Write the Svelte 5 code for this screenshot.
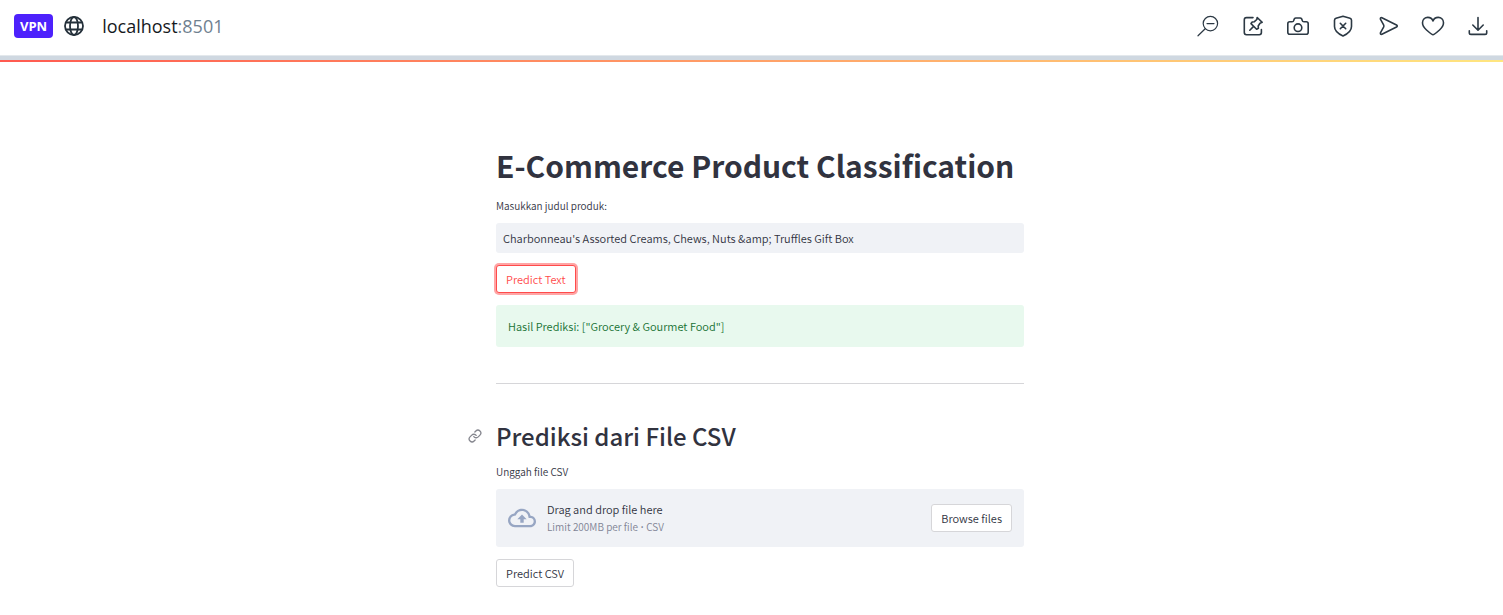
<script>
  let title = $state("Charbonneau's Assorted Creams, Chews, Nuts &amp; Truffles Gift Box");
  const result = 'Hasil Prediksi: ["Grocery & Gourmet Food"]';
</script>

<header class="browser">
  <span class="vpn">VPN</span>
  <svg class="globe" viewBox="0 0 20 20" width="20" height="20" fill="none" stroke="#24303a" stroke-width="1.8">
    <circle cx="10" cy="10" r="9" />
    <ellipse cx="10" cy="10" rx="4" ry="9" />
    <path d="M2 6.5h16M2 13.5h16" />
  </svg>
  <span class="address">localhost<span class="port">:8501</span></span>
  <nav class="tools" aria-label="Browser tools">
    <button aria-label="Zoom out">
      <svg viewBox="0 0 24 24"><g stroke-width="1.2"><circle cx="14.4" cy="9.6" r="7.2" /><path d="M11 9.6h7M9.2 14.7L2 21.8" /></g></svg>
    </button>
    <button aria-label="Pinboards">
      <svg viewBox="0 0 24 24"><path d="M12 3.6H5.5Q3.3 3.6 3.3 5.8V18.5Q3.3 20.7 5.5 20.7H18.2Q20.4 20.7 20.4 18.5V15.5M16.2 3.5L21.2 8.3L19 9.2L17.2 12L17.4 14.2L15.6 15.2L10 9.6L11.2 8L13.4 7.7L15.8 5.5ZM12.6 12.4L8.8 16.2" /></svg>
    </button>
    <button aria-label="Snapshot">
      <svg viewBox="0 0 24 24"><path d="M3.8 7.8H6Q7.5 7.8 7.8 6.3Q8.2 4 9.8 4H14.2Q15.8 4 16.2 6.3Q16.5 7.8 18 7.8H20.2Q22.2 7.8 22.2 9.8V18.2Q22.2 20.2 20.2 20.2H3.8Q1.8 20.2 1.8 18.2V9.8Q1.8 7.8 3.8 7.8Z" /><circle cx="12" cy="13.7" r="3.8" /></svg>
    </button>
    <button aria-label="Ad blocker">
      <svg viewBox="0 0 24 24"><path d="M12 2.2L19 4.3Q20.5 4.8 20.5 6.3V12.5C20.5 16.5 17.5 19.5 12 22C6.5 19.5 3.5 16.5 3.5 12.5V6.3Q3.5 4.8 5 4.3ZM9.3 9.3L14.7 14.7M14.7 9.3L9.3 14.7" /></svg>
    </button>
    <button aria-label="Flow">
      <svg viewBox="0 0 24 24"><path d="M5.900 3.700L20.500 11Q22 12 20.500 13L5.900 20.300Q4.200 20.700 4.400 18.800L7.600 13.200Q8.200 12 7.600 10.800L4.400 5.200Q4.200 3.300 5.900 3.700Z" /></svg>
    </button>
    <button aria-label="Bookmark">
      <svg viewBox="0 0 24 24"><path d="M12 20.800Q11 20.800 5.500 16C2.500 13.300 1.500 11.200 1.500 8.800C1.500 5.500 4 3.400 6.800 3.400C9.300 3.400 11.200 4.800 12 7C12.800 4.800 14.700 3.400 17.200 3.400C20 3.400 22.500 5.500 22.500 8.800C22.500 11.200 21.500 13.300 18.500 16Q13 20.800 12 20.800Z" /></svg>
    </button>
    <button aria-label="Downloads">
      <svg viewBox="0 0 24 24"><path d="M12 3.500V16M6.800 11L12 16.200L17.200 11M3.300 16.800V18.700Q3.300 20.400 5 20.400H19Q20.700 20.400 20.700 18.700V16.800" /></svg>
    </button>
  </nav>
</header>
<div class="edge"></div>
<div class="decoration"></div>

<main>
  <div class="column">
    <h1>E-Commerce Product Classification</h1>
    <label class="caption" for="product-title">Masukkan judul produk:</label>
    <input id="product-title" class="field" type="text" bind:value={title} />
    <button class="action focused">Predict Text</button>
    <div class="success" role="status">{result}</div>
    <hr />
    <h2 id="csv">
      <a class="anchor" href="#csv" aria-label="Link to section">
        <svg viewBox="0 0 24 24" width="14" height="14" fill="none" stroke="#85868e" stroke-width="2.2" stroke-linecap="round" stroke-linejoin="round">
          <path d="M10 13a5 5 0 0 0 7.54.54l3-3a5 5 0 0 0-7.07-7.07l-1.72 1.71" />
          <path d="M14 11a5 5 0 0 0-7.54-.54l-3 3a5 5 0 0 0 7.07 7.07l1.71-1.71" />
        </svg>
      </a>Prediksi dari File CSV
    </h2>
    <span class="caption" id="upload-label">Unggah file CSV</span>
    <section class="dropzone" aria-labelledby="upload-label">
      <svg viewBox="0 0 24 24" width="28" height="28" fill="#97a6c3">
        <path d="M19.35 10.04A7.49 7.49 0 0 0 12 4C9.11 4 6.6 5.64 5.35 8.04A5.994 5.994 0 0 0 0 14c0 3.31 2.69 6 6 6h13c2.76 0 5-2.24 5-5 0-2.64-2.05-4.78-4.65-4.96zM19 18H6c-2.21 0-4-1.79-4-4 0-2.05 1.53-3.76 3.56-3.97l1.07-.11.5-.95A5.469 5.469 0 0 1 12 6c2.62 0 4.88 1.86 5.39 4.43l.3 1.5 1.53.11A2.98 2.98 0 0 1 22 15c0 1.65-1.35 3-3 3zM8 13h2.55v3h2.9v-3H16l-4-4z" />
      </svg>
      <div class="hint">
        <span>Drag and drop file here</span>
        <small>Limit 200MB per file <span class="dot">•</span> CSV</small>
      </div>
      <button class="action">Browse files</button>
    </section>
    <button class="action">Predict CSV</button>
  </div>
</main>

<style>
  :global(body) {
    background: #fff;
    color: #31333f;
    font-family: "Noto Sans CJK SC", sans-serif;
    font-weight: 350;
  }
  .browser {
    display: flex;
    align-items: center;
    box-sizing: border-box;
    height: 55px;
    padding: 0 13px 3px 14px;
    font-family: "Open Sans", sans-serif;
  }
  .vpn {
    padding: 0 6px;
    border-radius: 4px;
    background: #4d21fc;
    color: #fff;
    font-size: 13px;
    font-weight: 700;
    line-height: 24px;
  }
  .globe {
    margin: 0 18px 0 11px;
  }
  .address {
    color: #16191d;
    font-size: 18px;
    font-weight: 400;
    line-height: 28px;
  }
  .port {
    color: #6f8190;
  }
  .tools {
    display: flex;
    gap: 21px;
    margin-left: auto;
  }
  .tools button {
    padding: 0;
    border: 0;
    background: none;
  }
  .tools svg {
    display: block;
    width: 24px;
    height: 24px;
    fill: none;
    stroke: #2c3944;
    stroke-width: 1.6;
    stroke-linecap: round;
    stroke-linejoin: round;
  }
  .edge {
    height: 4px;
    border-top: 1px solid #e3e8ec;
    background: #cfd8e1;
  }
  .decoration {
    height: 2px;
    background: linear-gradient(90deg, #ff5a50, #ffe680);
  }
  main {
    padding: 83px 0 24px 17px;
  }
  .column {
    display: flex;
    flex-direction: column;
    align-items: flex-start;
    max-width: 528px;
    margin: 0 auto;
  }
  h1,
  h2 {
    margin: 0;
    color: #31333f;
  }
  h1 {
    font-size: 30px;
    font-weight: 700;
    line-height: 40px;
  }
  h2 {
    position: relative;
    font-size: 24px;
    font-weight: 500;
    line-height: 30px;
  }
  .anchor {
    position: absolute;
    top: 8px;
    left: -28px;
    line-height: 0;
  }
  .caption {
    margin: 13px 0 9px;
    font-size: 10px;
    line-height: 16px;
  }
  .field {
    box-sizing: border-box;
    width: 100%;
    height: 30px;
    padding: 0 7px;
    border: 0;
    border-radius: 3px;
    background: #f0f2f6;
    color: inherit;
    font: inherit;
    font-size: 11px;
  }
  .action {
    padding: 0 9px;
    border: 1px solid #d6d6d9;
    border-radius: 3px;
    background: #fff;
    color: inherit;
    font: inherit;
    font-size: 11px;
    line-height: 26px;
  }
  .focused {
    margin: 12px 0;
    border-color: #ff4b4b;
    box-shadow: 0 0 0 2px #ff4b4b80;
    color: #ff4b4b;
  }
  .success {
    box-sizing: border-box;
    width: 100%;
    padding: 12px;
    border-radius: 3px;
    background: #e8f9ee;
    color: #177233;
    font-size: 11px;
    line-height: 18px;
  }
  hr {
    width: 100%;
    margin: 36px 0 37px;
    border: 0;
    border-top: 1px solid #d6d6d9;
  }
  .dropzone {
    display: flex;
    align-items: center;
    box-sizing: border-box;
    width: 100%;
    margin-bottom: 12px;
    padding: 11px 12px;
    border-radius: 3px;
    background: #f0f2f6;
  }
  .hint {
    display: flex;
    flex-direction: column;
    flex: 1;
    margin-left: 11px;
    font-size: 11px;
    line-height: 18px;
  }
  small {
    color: #808495;
    font-size: 10px;
  }
  .dot {
    font-family: "Open Sans", sans-serif;
    line-height: 1;
  }
</style>
